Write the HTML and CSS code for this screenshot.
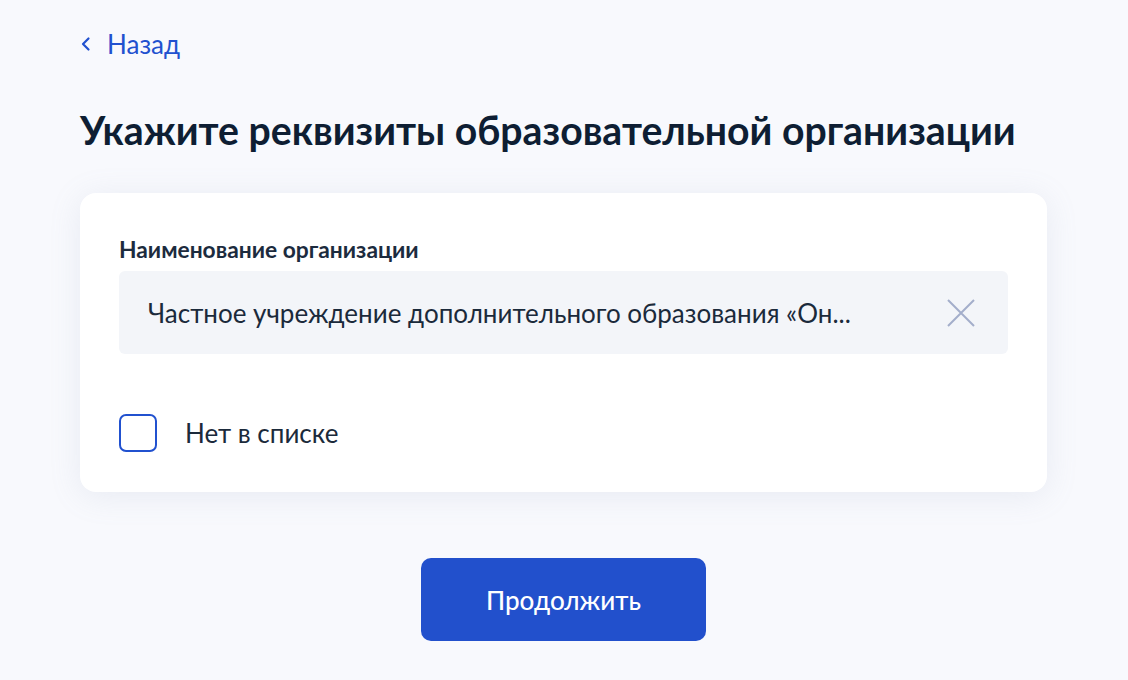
FILE: index.html
```html
<!DOCTYPE html>
<html lang="ru">
<head>
<meta charset="utf-8">
<link rel="stylesheet" href="styles.css">
</head>
<body>
<main class="page">
  <a class="back" href="#">
    <svg class="back-icon" width="12" height="16" viewBox="0 0 12 16"><path d="M8.5 2.5 L3 8 L8.5 13.5" fill="none" stroke="currentColor" stroke-width="2.2" stroke-linecap="round" stroke-linejoin="round"/></svg>
    <span>Назад</span>
  </a>
  <h1 class="title">Укажите реквизиты образовательной организации</h1>
  <section class="card">
    <div class="label">Наименование организации</div>
    <div class="input">
      <span class="input-text">Частное учреждение дополнительного образования «Он...</span>
      <svg class="clear" width="28" height="28" viewBox="0 0 28 28"><path d="M1 1 L27 27 M27 1 L1 27" fill="none" stroke="#a3aecb" stroke-width="2"/></svg>
    </div>
    <label class="check">
      <span class="box"></span>
      <span class="check-text">Нет в списке</span>
    </label>
  </section>
  <div class="actions">
    <button class="btn">Продолжить</button>
  </div>
</main>
</body>
</html>
```
FILE: styles.css
```css
* { box-sizing: border-box; }
html, body { margin: 0; padding: 0; }
body {
  background: #f8f9fd;
  font-family: Lato, "Noto Sans", sans-serif;
  color: #0b1f33;
  width: 1128px;
  height: 680px;
  overflow: hidden;
}
.page {
  padding: 28px 81px 0 80px;
}
.back {
  display: flex;
  align-items: center;
  gap: 15px;
  color: #2151cf;
  text-decoration: none;
  font-size: 26px;
  line-height: 32px;
  height: 32px;
}
.title {
  margin: 46px 0 0 0;
  font-size: 39.2px;
  line-height: 48px;
  font-weight: 700;
  color: #0e1e33;
  white-space: nowrap;
}
.card {
  margin-top: 39px;
  width: 967px;
  background: #fff;
  border-radius: 16px;
  box-shadow: 0 4px 32px rgba(134, 147, 180, 0.14);
  padding: 42px 39px 40px 39px;
}
.label {
  font-size: 22.8px;
  line-height: 28px;
  font-weight: 700;
  color: #1c2b3e;
  margin-bottom: 8px;
}
.input {
  height: 83px;
  background: #f3f5f9;
  border-radius: 6px;
  display: flex;
  align-items: center;
  justify-content: space-between;
  padding: 0 33px 0 29px;
}
.input-text {
  font-size: 26px;
  color: #1b2a3b;
  white-space: nowrap;
}
.check {
  margin-top: 60px;
  display: flex;
  align-items: center;
  gap: 28px;
  height: 38px;
}
.box {
  width: 38px;
  height: 38px;
  border: 2.5px solid #2151cf;
  border-radius: 7px;
}
.check-text {
  font-size: 26px;
  color: #1b2a3b;
}
.actions {
  display: flex;
  justify-content: center;
  margin-top: 66px;
}
.btn {
  width: 285px;
  height: 83px;
  border: none;
  border-radius: 10px;
  background: #2250cc;
  color: #fff;
  font-family: Lato, "Noto Sans", sans-serif;
  font-size: 26px;
  font-weight: 500;
}
```
